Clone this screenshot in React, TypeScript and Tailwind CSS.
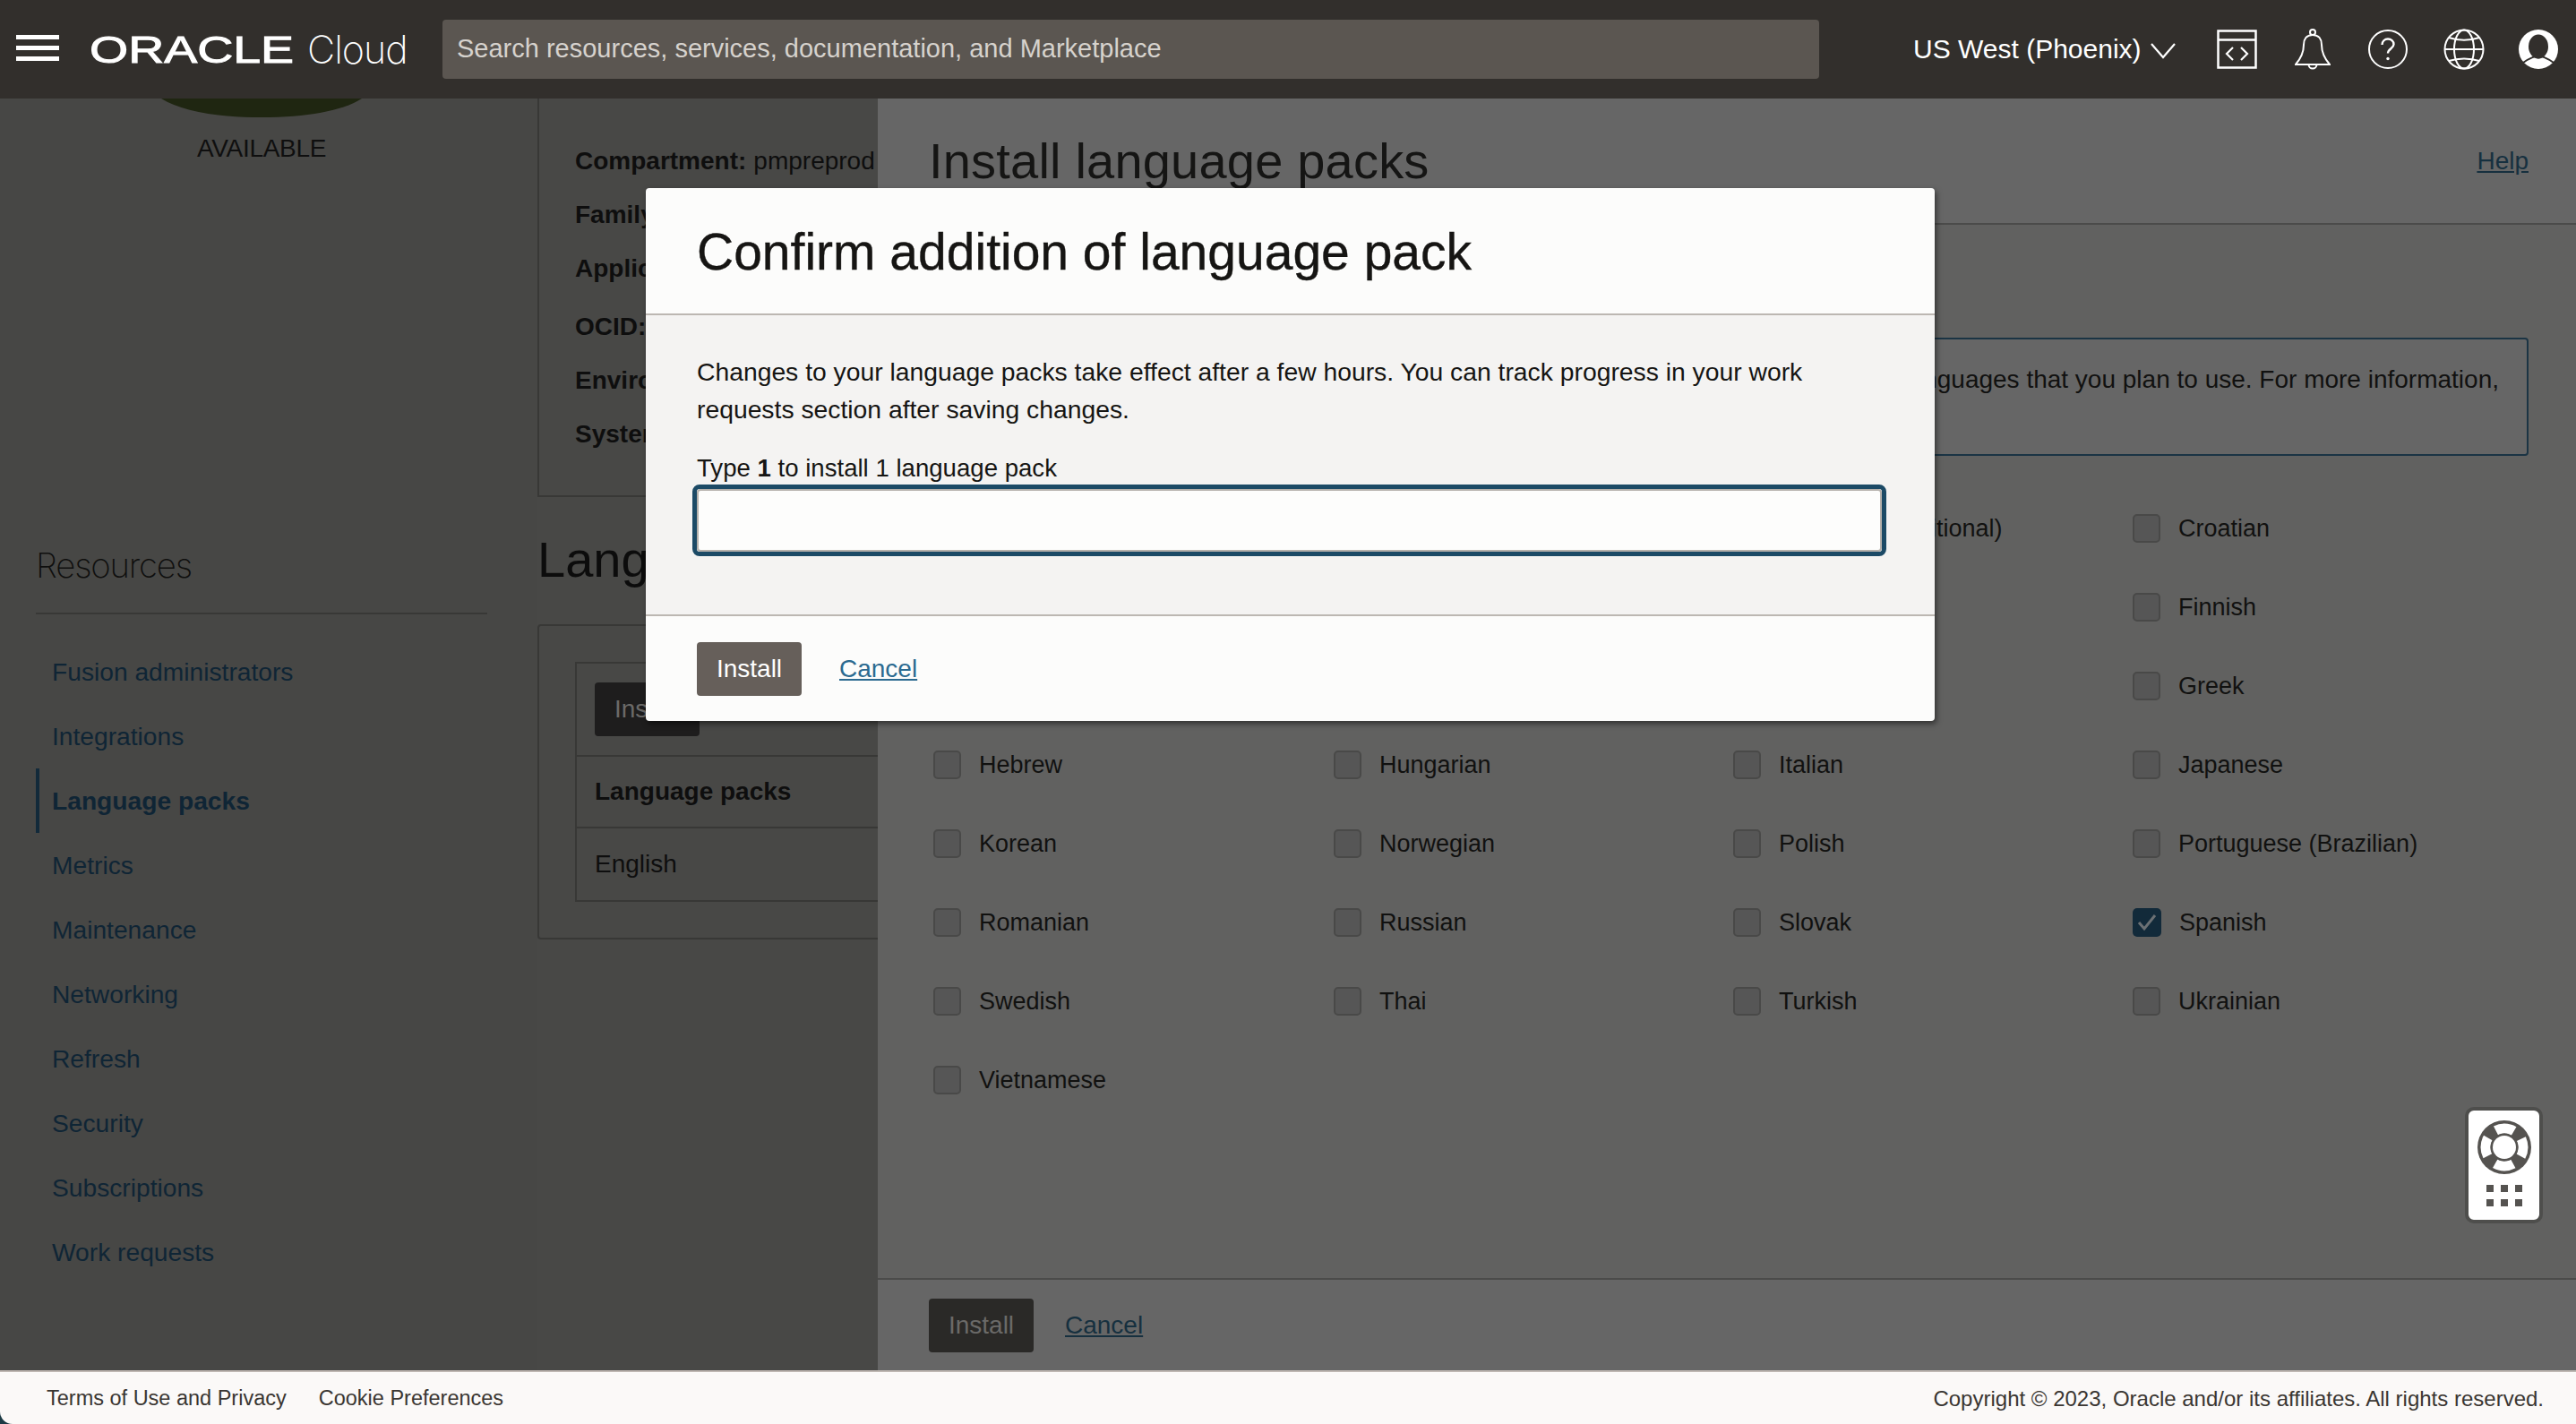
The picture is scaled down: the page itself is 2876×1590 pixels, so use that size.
const sideLinks = [
  "Fusion administrators",
  "Integrations",
  "Language packs",
  "Metrics",
  "Maintenance",
  "Networking",
  "Refresh",
  "Security",
  "Subscriptions",
  "Work requests",
];

const details = ["Compartment:", "Family", "Application", "OCID:", "Environment", "System"];

const languages = [
  "Arabic", "Chinese (Simplified)", "Chinese (Traditional)", "Croatian",
  "Czech", "Danish", "Dutch", "Finnish",
  "French", "French (Canadian)", "German", "Greek",
  "Hebrew", "Hungarian", "Italian", "Japanese",
  "Korean", "Norwegian", "Polish", "Portuguese (Brazilian)",
  "Romanian", "Russian", "Slovak", "Spanish",
  "Swedish", "Thai", "Turkish", "Ukrainian",
  "Vietnamese",
];

function CodeIcon() {
  return (
    <svg width="45" height="44" viewBox="0 0 45 44" fill="none" stroke="white" strokeWidth="2.5">
      <rect x="1.5" y="1.5" width="42" height="41" />
      <path d="M1.5 11.5h42" />
      <path d="M18 20l-7 7 7 7M27 20l7 7-7 7" strokeWidth="2.2" />
    </svg>
  );
}

function BellIcon() {
  return (
    <svg width="40" height="46" viewBox="0 0 40 46" fill="none" stroke="white" strokeWidth="2">
      <circle cx="20" cy="4" r="3" />
      <path d="M20 7c-7 0-10 5-10 11 0 8-3 15-9 22h38c-6-7-9-14-9-22 0-6-3-11-10-11z" />
      <path d="M15.5 40a4.5 4.5 0 0 0 9 0" />
    </svg>
  );
}

function HelpIcon() {
  return (
    <svg width="44" height="44" viewBox="0 0 44 44" fill="none" stroke="white" strokeWidth="2">
      <circle cx="22" cy="22" r="21" />
      <path d="M15.5 17c0-4 3-6.500 6.500-6.500s6.500 2.500 6.500 6c0 4.500-6.500 5-6.500 10" strokeWidth="2.400" />
      <circle cx="22" cy="32.500" r="1.700" fill="white" stroke="none" />
    </svg>
  );
}

function GlobeIcon() {
  return (
    <svg width="46" height="46" viewBox="0 0 46 46" fill="none" stroke="white" strokeWidth="2">
      <circle cx="23" cy="23" r="21.500" />
      <ellipse cx="23" cy="23" rx="11" ry="21.500" />
      <path d="M1.500 23h43M6 10c10 3.500 24 3.500 34 0M6 36c10-3.500 24-3.500 34 0" />
    </svg>
  );
}

function UserIcon() {
  return (
    <svg width="44" height="44" viewBox="0 0 44 44">
      <circle cx="22" cy="22" r="22" fill="white" />
      <ellipse cx="22" cy="19" rx="11" ry="13.500" fill="#322f2c" />
      <path d="M5 37c5-4 10-5.500 13-7 2 2 6 2 8 0 3 1.500 8 3 13 7" fill="none" stroke="#322f2c" strokeWidth="2" />
    </svg>
  );
}

function LifeBuoy() {
  return (
    <svg width="60" height="60" viewBox="0 0 60 60">
      <circle cx="30" cy="30" r="30" fill="#555350" />
      <circle cx="30" cy="30" r="21" fill="none" stroke="white" strokeWidth="11" strokeDasharray="21 11.990" strokeDashoffset="10.500" />
      <circle cx="30" cy="30" r="15.500" fill="#555350" />
      <circle cx="30" cy="30" r="13" fill="white" />
    </svg>
  );
}

function LanguageCheck({ name }: { name: string }) {
  const checked = name === "Spanish";
  return (
    <div className="flex items-center gap-[20px] h-[88px]">
      {checked ? (
        <span className="w-[32px] h-[32px] rounded-[5px] bg-[#122a3a] flex items-center justify-center">
          <svg width="22" height="20" viewBox="0 0 22 20" fill="none" stroke="#6b7074" strokeWidth="3">
            <path d="M2 10l6 7L20 2" />
          </svg>
        </span>
      ) : (
        <span className="w-[31px] h-[32px] rounded-[5px] border-2 border-[#494948] bg-[#565656]" />
      )}
      <span className="text-[27px] text-[#111110]">{name}</span>
    </div>
  );
}

export default function App() {
  return (
    <div className="relative w-full h-[1590px] flex flex-col overflow-hidden bg-[#1d3a45] font-['Liberation_Sans',sans-serif]">
      <header className="h-[110px] shrink-0 bg-[#322f2c] flex items-center text-white">
        <div className="ml-[18px] -mt-[4px] w-[48px] flex flex-col gap-[7px]">
          <span className="h-[5px] bg-white" />
          <span className="h-[5px] bg-white" />
          <span className="h-[5px] bg-white" />
        </div>
        <div className="ml-[34px] w-[394px] flex items-center whitespace-nowrap leading-none">
          <span className="w-[243px] inline-block origin-left scale-x-[1.29] text-[43px] [-webkit-text-stroke:1px_white]">ORACLE</span>
          <span className="text-[43px] font-['Inter'] font-extralight tracking-[-1px]">Cloud</span>
        </div>
        <div className="w-[1537px] h-[66px] rounded-[4px] bg-[#5b5651] flex items-center px-[16px] text-[29px] text-[#d6d2cd]">
          Search resources, services, documentation, and Marketplace
        </div>
        <div className="ml-[105px] flex items-center gap-[10px] text-[30px] -mt-[2px]">
          US West (Phoenix)
          <svg width="28" height="18" viewBox="0 0 28 18" fill="none" stroke="white" strokeWidth="2.2" className="mt-[6px]">
            <path d="M1 1l13 15L27 1" />
          </svg>
        </div>
        <div className="ml-[46px] flex items-center">
          <CodeIcon />
          <div className="ml-[42px]">
            <BellIcon />
          </div>
          <div className="ml-[42px]">
            <HelpIcon />
          </div>
          <div className="ml-[40px]">
            <GlobeIcon />
          </div>
          <div className="ml-[38px]">
            <UserIcon />
          </div>
        </div>
      </header>

      <main className="flex-1 flex min-h-0">
        <aside className="w-[600px] shrink-0 bg-[#474745]">
          <div className="w-[584px] flex flex-col items-center">
            <svg width="224" height="21" viewBox="0 0 224 21">
              <path d="M0 0c22 14 62 21 112 21s90-7 112-21z" fill="#1f2611" />
            </svg>
            <div className="mt-[15px] h-[40px] leading-[40px] text-[28px] tracking-[-0.3px] text-[#0f0f0f]">AVAILABLE</div>
          </div>
          <div className="mt-[420px] ml-[40px] w-[504px] text-left">
            <div className="h-[50px] leading-[50px] font-['Inter'] text-[38.300px] font-extralight tracking-[-1.200px] text-[#0f0f0e]">Resources</div>
            <div className="mt-[28px] h-[2px] bg-[#383836]" />
            <nav className="mt-[28px]">
              {sideLinks.map((link) => {
                const active = link === "Language packs";
                return (
                  <div
                    key={link}
                    className={`h-[72px] flex items-center text-[28.2px] text-[#0f2535] ${
                      active ? "border-l-4 border-[#122a3a] pl-[14px] font-bold" : "pl-[18px]"
                    }`}
                  >
                    {link}
                  </div>
                );
              })}
            </nav>
          </div>
        </aside>

        <section className="w-[380px] shrink-0 overflow-hidden whitespace-nowrap bg-[#484846] text-[28px] text-[#0e0e0e]">
          <div className="h-[445px] border-l-2 border-b-2 border-[#383836] pt-[40px] pl-[40px]">
            {details.map((label, i) => (
              <div key={label} className={`h-[60px] flex items-center ${label === "OCID:" ? "mt-[5px]" : ""}`}>
                <b>{label}</b>
                {i === 0 && <span className="ml-[8px]">pmpreprod</span>}
              </div>
            ))}
          </div>
          <h2 className="mt-[38px] h-[64px] leading-[64px] text-[56px] text-[#0c0c0c]">Language packs</h2>
          <div className="mt-[40px] h-[352px] w-[500px] border-2 border-[#383836] rounded-[4px] pt-[40px] pl-[40px]">
            <div className="border-l-2 border-t-2 border-[#383836]">
              <div className="h-[102px] flex items-center pl-[20px]">
                <span className="w-[117px] h-[60px] rounded-[4px] bg-[#1e1d1d] text-[#6b6a68] flex items-center justify-center">
                  Install
                </span>
              </div>
              <div className="h-[82px] border-t-2 border-b-2 border-[#383836] flex items-center pl-[20px] font-bold">
                Language packs
              </div>
              <div className="h-[82px] border-b-2 border-[#383836] flex items-center pl-[20px]">English</div>
            </div>
          </div>
        </section>

        <section className="flex-1 flex flex-col bg-[#616160] text-[#111110]">
          <div className="h-[141px] shrink-0 bg-[#666666] border-b-2 border-[#4b4b4a] flex items-center justify-between pl-[57px] pr-[53px]">
            <h1 className="text-[56px] tracking-[0.200px] text-[#151514]">Install language packs</h1>
            <a className="text-[28px] underline text-[#16303f]">Help</a>
          </div>
          <div className="flex-1 pl-[57px] pr-[53px] pt-[126px]">
            <div className="h-[132px] rounded-[4px] border-2 border-[#1b3444] bg-[#666666] pr-[31px] pt-[24px] text-[28px] leading-[42px] overflow-hidden">
              <p className="text-right whitespace-nowrap">
                You can't remove a language pack once it's added. Select only the languages that you plan to use. For more information,
              </p>
              <p className="pl-[40px]">see Adding language packs.</p>
            </div>
            <div className="mt-[37px] ml-[5px] grid grid-cols-[447px_446px_446px_1fr]">
              {languages.map((name) => (
                <LanguageCheck key={name} name={name} />
              ))}
            </div>
          </div>
          <div className="h-[103px] shrink-0 bg-[#666666] border-t-2 border-[#4b4b4a] flex items-center px-[57px] gap-[35px] text-[28px]">
            <span className="w-[117px] h-[60px] rounded-[4px] bg-[#2a2927] text-[#6b6a68] flex items-center justify-center">
              Install
            </span>
            <a className="underline text-[#16303f]">Cancel</a>
          </div>
        </section>
      </main>

      <footer className="h-[60px] shrink-0 bg-[#fbf9f8] rounded-bl-[14px] border-t-2 border-[#bfb8b3] flex items-center justify-between pl-[52px] pr-[36px] pt-[2px] text-[#3a3632]">
        <div className="flex gap-[36px] text-[23.500px]">
          <span>Terms of Use and Privacy</span>
          <span>Cookie Preferences</span>
        </div>
        <span className="text-[24px]">Copyright © 2023, Oracle and/or its affiliates. All rights reserved.</span>
      </footer>

      {/* confirm dialog */}
      <div className="absolute left-[721px] top-[210px] w-[1439px] h-[595px] flex flex-col rounded-[4px] bg-[#fcfcfb] shadow-[2px_3px_6px_rgba(0,0,0,0.5)] text-[#161513]">
        <div className="h-[140px] shrink-0 flex items-center px-[57px] pt-[3px]">
          <h2 className="text-[57px] [-webkit-text-stroke:0.4px_#161513]">Confirm addition of language pack</h2>
        </div>
        <div className="h-[338px] shrink-0 bg-[#f4f3f2] border-y-2 border-[#bcb7b2] px-[57px] pt-[42px] text-[28.300px] leading-[42px]">
          <p className="w-[1300px]">
            Changes to your language packs take effect after a few hours. You can track progress in your work requests section after saving changes.
          </p>
          <label className="block mt-[25px] text-[27.600px] leading-[40px]">
            Type <b>1</b> to install 1 language pack
          </label>
          <div className="-ml-[5px] mt-[-2px] w-[1333px] h-[80px] rounded-[8px] border-[5px] border-[#1c4a66] bg-white">
            <div className="h-full rounded-[4px] border-2 border-[#b5b0ab] bg-[#fdfdfc]" />
          </div>
        </div>
        <div className="flex-1 flex items-center px-[57px] gap-[42px] text-[28px]">
          <span className="w-[117px] h-[60px] rounded-[4px] bg-[#665f5a] text-white flex items-center justify-center">
            Install
          </span>
          <a className="underline text-[#2b6a90]">Cancel</a>
        </div>
      </div>

      {/* floating help widget */}
      <div className="absolute left-[2752px] top-[1236px] w-[87px] h-[130px] rounded-[10px] border-4 border-[#4e4e4c] bg-white flex flex-col items-center pt-[11px]">
        <LifeBuoy />
        <div className="mt-[12px] grid grid-cols-3 gap-x-[8px] gap-y-[8px]">
          {[0, 1, 2, 3, 4, 5].map((i) => (
            <span key={i} className="w-[8px] h-[8px] bg-[#555350]" />
          ))}
        </div>
      </div>
    </div>
  );
}
